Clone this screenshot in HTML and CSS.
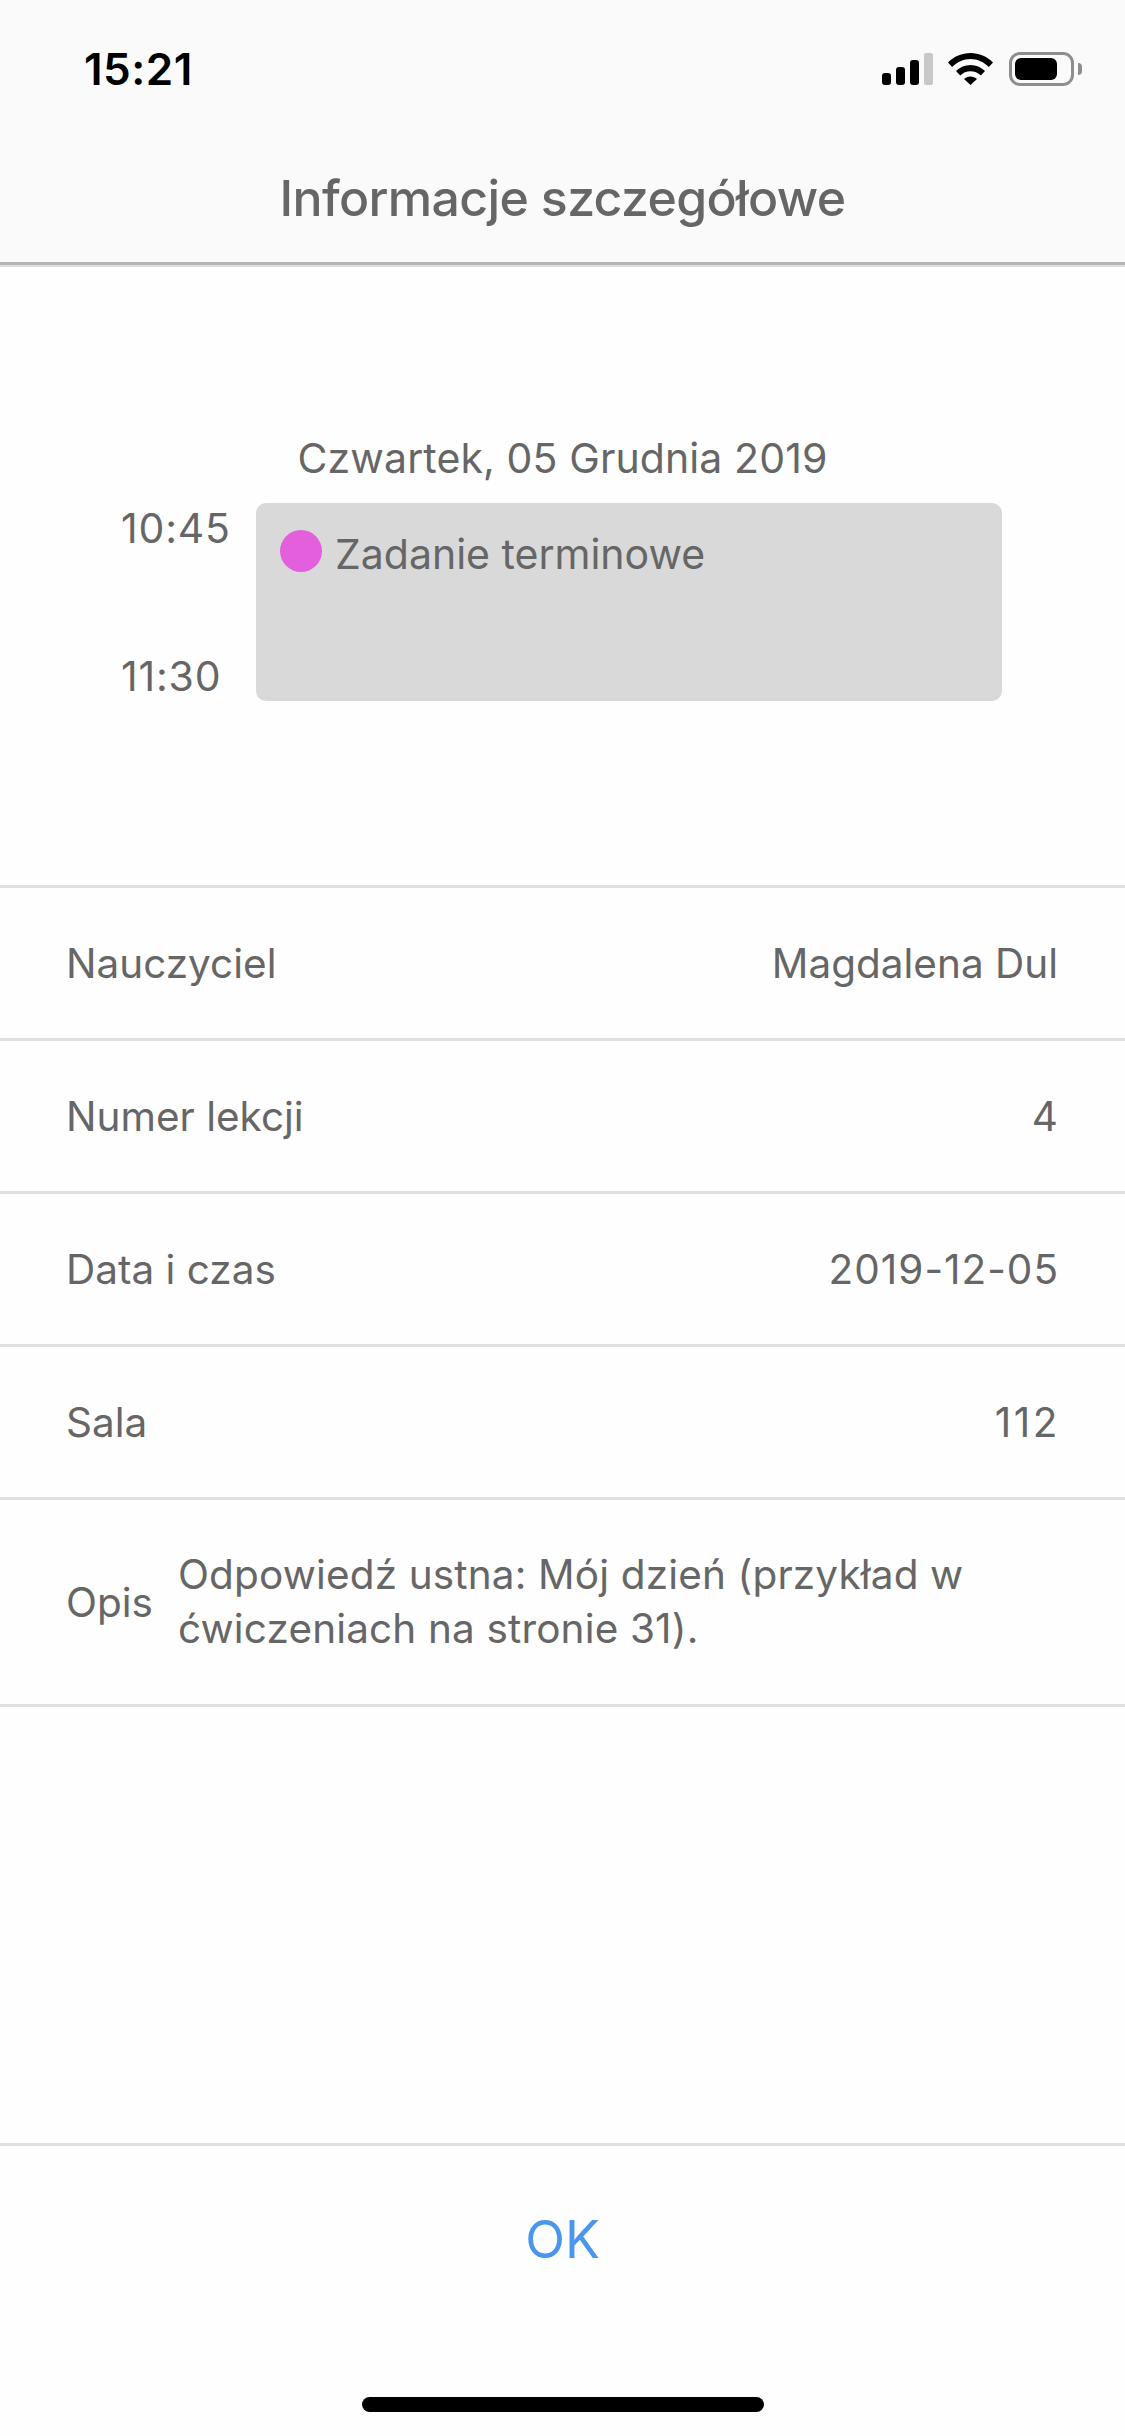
FILE: index.html
```html
<!DOCTYPE html>
<html lang="pl">
<head>
    <meta charset="UTF-8">
    <meta name="viewport" content="width=device-width, initial-scale=1.0">
    <title>Informacje szczegółowe</title>
    <link rel="stylesheet" href="styles.css">
</head>
<body>
    <div class="screen">

        <!-- Top bar -->
        <header class="top-bar">
            <div class="status-bar">
                <span class="clock">15:21</span>
                <div class="status-icons">
                    <svg class="signal-icon" width="51" height="32" viewBox="0 0 51 32">
                        <rect x="0" y="20" width="9" height="12" rx="3" fill="#000"/>
                        <rect x="14" y="14" width="9" height="18" rx="3" fill="#000"/>
                        <rect x="28" y="7" width="9" height="25" rx="3" fill="#000"/>
                        <rect x="42" y="0" width="9" height="32" rx="2" fill="#c8c8c8"/>
                    </svg>
                    <svg class="wifi-icon" width="45" height="33" viewBox="0 0 45 33">
                        <path d="M0 10.5C6 4.5 14 1 22.500 1S39 4.500 45 10.500L40.800 15C36 10.200 29.500 7 22.500 7S9 10.200 4.200 15Z" fill="#000"/>
                        <path d="M8 19C12 15.200 17 13 22.500 13S33 15.200 37 19L32.800 23.400C30 20.800 26.500 19.200 22.500 19.200S15 20.800 12.200 23.400Z" fill="#000"/>
                        <path d="M16 27C17.800 25.500 20 24.600 22.500 24.600S27.200 25.500 29 27L22.500 33Z" fill="#000"/>
                    </svg>
                    <div class="battery">
                        <div class="battery-case">
                            <div class="battery-level"></div>
                        </div>
                        <div class="battery-nub"></div>
                    </div>
                </div>
            </div>
            <h1 class="title">Informacje szczegółowe</h1>
        </header>

        <!-- Calendar preview -->
        <section class="calendar">
            <div class="calendar-date">Czwartek, 05 Grudnia 2019</div>
            <div class="calendar-row">
                <div class="calendar-times">
                    <span>10:45</span>
                    <span>11:30</span>
                </div>
                <div class="event">
                    <span class="event-dot"></span>
                    <span class="event-name">Zadanie terminowe</span>
                </div>
            </div>
        </section>

        <!-- Details -->
        <div class="details">
            <div class="detail-row">
                <span>Nauczyciel</span>
                <span>Magdalena Dul</span>
            </div>
            <div class="detail-row">
                <span>Numer lekcji</span>
                <span>4</span>
            </div>
            <div class="detail-row">
                <span>Data i czas</span>
                <span class="date-value">2019-12-05</span>
            </div>
            <div class="detail-row">
                <span>Sala</span>
                <span class="room-value">112</span>
            </div>
            <div class="detail-row detail-row-long">
                <span>Opis</span>
                <span class="detail-long-text">Odpowiedź ustna: Mój dzień (przykład w ćwiczeniach na stronie 31).</span>
            </div>
        </div>

        <!-- Bottom button -->
        <footer class="footer">
            <button class="ok-btn">OK</button>
            <div class="home-indicator"></div>
        </footer>

    </div>
</body>
</html>
```

FILE: styles.css
```css
* {
    margin: 0;
    padding: 0;
    box-sizing: border-box;
}
body {
    font-family: Inter, "Liberation Sans", sans-serif;
    background: #fefefe;
    color: #666;
}
.screen {
    width: 1125px;
    height: 2436px;
    display: flex;
    flex-direction: column;
    overflow: hidden;
}
.top-bar {
    height: 267px;
    background: #fafafa;
    border-bottom: 2px solid #dcdcdc;
    box-shadow: inset 0 -3px 0 #b4b4b4;
}
.status-bar {
    height: 136px;
    padding: 48px 43px 0 84px;
    display: flex;
    justify-content: space-between;
    align-items: flex-start;
}
.clock {
    font-size: 44px;
    line-height: 42px;
    font-weight: 600;
    letter-spacing: 0.5px;
    color: #000;
}
.status-icons {
    display: flex;
    align-items: flex-start;
    padding-top: 5px;
}
.signal-icon {
    margin-right: 15px;
}
.wifi-icon {
    margin-top: -1px;
    margin-right: 16px;
}
.battery {
    display: flex;
    align-items: center;
    height: 34px;
    margin-top: -1px;
}
.battery-case {
    width: 65px;
    height: 34px;
    padding: 3px;
    border: 3px solid #8e8e8e;
    border-radius: 11px;
}
.battery-level {
    width: 42px;
    height: 22px;
    background: #000;
    border-radius: 6px;
}
.battery-nub {
    width: 4px;
    height: 12px;
    margin-left: 4px;
    background: #8e8e8e;
    border-radius: 0 4px 4px 0;
}
.title {
    font-size: 50px;
    line-height: 60px;
    font-weight: 450;
    text-align: center;
    color: #666;
    letter-spacing: -0.65px;
    padding-top: 32px;
}
.calendar {
    height: 618px;
    padding: 164px 123px 0 121px;
}
.calendar-date {
    font-size: 41px;
    line-height: 54px;
    letter-spacing: 0.1px;
    text-align: center;
    width: 883px;
}
.calendar-row {
    display: flex;
    margin-top: 18px;
}
.calendar-times {
    width: 135px;
    height: 198px;
    display: flex;
    flex-direction: column;
    justify-content: space-between;
    font-size: 41px;
    line-height: 50px;
    letter-spacing: 0.8px;
}
.event {
    width: 746px;
    height: 198px;
    padding: 26px 24px;
    background: #d9d9d9;
    border-radius: 10px;
    display: flex;
    align-items: flex-start;
}
.event-dot {
    width: 42px;
    height: 42px;
    margin-top: 1px;
    border-radius: 50%;
    background: #e35fdb;
    margin-right: 13px;
}
.event-name {
    font-size: 41px;
    line-height: 50px;
}
.details {
    border-top: 3px solid #e0e0e0;
}
.detail-row {
    height: 153px;
    padding: 0 67px 0 66px;
    border-bottom: 3px solid #e0e0e0;
    display: flex;
    justify-content: space-between;
    align-items: center;
    font-size: 40.5px;
}
.date-value {
    letter-spacing: 1px;
    margin-right: -1px;
}
.room-value {
    letter-spacing: 2.5px;
    margin-right: -2px;
}
.detail-row-long {
    height: 207px;
    justify-content: flex-start;
    gap: 25px;
}
.detail-long-text {
    width: 830px;
    line-height: 54px;
    letter-spacing: 0.15px;
}
.footer {
    margin-top: auto;
    height: 293px;
    border-top: 3px solid #e0e0e0;
    display: flex;
    flex-direction: column;
    align-items: center;
}
.ok-btn {
    margin-top: 61px;
    font-family: inherit;
    font-size: 52px;
    line-height: 66px;
    color: #4a96ee;
    background: transparent;
    border: none;
}
.home-indicator {
    width: 402px;
    height: 15px;
    margin-top: 124px;
    background: #000;
    border-radius: 8px;
}
```
